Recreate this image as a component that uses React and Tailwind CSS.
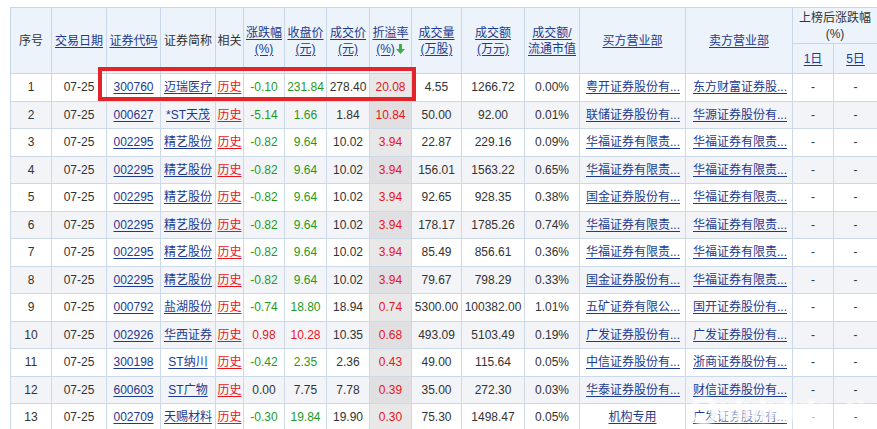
import React from "react";

const rows = [
  ["1","07-25","300760","迈瑞医疗","-0.10","231.84","278.40","20.08","4.55","1266.72","0.00%","粤开证券股份有...","东方财富证券股..."],
  ["2","07-25","000627","*ST天茂","-5.14","1.66","1.84","10.84","50.00","92.00","0.01%","联储证券股份有...","华源证券股份有..."],
  ["3","07-25","002295","精艺股份","-0.82","9.64","10.02","3.94","22.87","229.16","0.09%","华福证券有限责...","华福证券有限责..."],
  ["4","07-25","002295","精艺股份","-0.82","9.64","10.02","3.94","156.01","1563.22","0.65%","华福证券有限责...","华福证券有限责..."],
  ["5","07-25","002295","精艺股份","-0.82","9.64","10.02","3.94","92.65","928.35","0.38%","国金证券股份有...","华福证券有限责..."],
  ["6","07-25","002295","精艺股份","-0.82","9.64","10.02","3.94","178.17","1785.26","0.74%","华福证券有限责...","华福证券有限责..."],
  ["7","07-25","002295","精艺股份","-0.82","9.64","10.02","3.94","85.49","856.61","0.36%","华福证券有限责...","华福证券有限责..."],
  ["8","07-25","002295","精艺股份","-0.82","9.64","10.02","3.94","79.67","798.29","0.33%","国金证券股份有...","华福证券有限责..."],
  ["9","07-25","000792","盐湖股份","-0.74","18.80","18.94","0.74","5300.00","100382.00","1.01%","五矿证券有限公...","国开证券股份有..."],
  ["10","07-25","002926","华西证券","0.98","10.28","10.35","0.68","493.09","5103.49","0.19%","广发证券股份有...","广发证券股份有..."],
  ["11","07-25","300198","ST纳川","-0.42","2.35","2.36","0.43","49.00","115.64","0.05%","中信证券股份有...","浙商证券股份有..."],
  ["12","07-25","600603","ST广物","0.00","7.75","7.78","0.39","35.00","272.30","0.03%","华泰证券股份有...","财信证券股份有..."],
  ["13","07-25","002709","天赐材料","-0.30","19.84","19.90","0.30","75.30","1498.47","0.05%","机构专用","广发证券股份有..."],
];

const widths = [41, 55, 54, 55, 28, 41, 42, 43, 42, 50, 63, 55, 106, 107, 41, 44];

function chgColor(v) {
  const n = parseFloat(v);
  if (n > 0) return "text-[#e8141c]";
  if (n < 0) return "text-[#1f9a1f]";
  return "text-[#333333]";
}

const th = "border border-[#c6d7ea] bg-[#edf3fa] font-normal p-0 align-middle text-center leading-[16px]";
const td = "border border-[#cbd9e9] p-0 align-middle text-center whitespace-nowrap overflow-hidden";
const link = "text-[#1c3a8f] underline underline-offset-[2px]";

function Arrow() {
  return (
    <svg width="9" height="10" viewBox="0 0 9 10" className="inline-block align-[-1px] ml-[1px]">
      <path d="M3 0h3v5h3L4.5 10 0 5h3z" fill="#3fae49" />
    </svg>
  );
}

function Watermark() {
  const bars = [];
  const xs = [4, 14, 22, 30, 38, 46, 54, 62, 70, 78, 86, 94, 102];
  xs.forEach((x, i) => {
    bars.push(<rect key={"b" + i} x={x} y={i % 3 === 0 ? 6 : 9} width="6" height={i % 3 === 0 ? 22 : 18} rx="2" fill="white" />);
  });
  return (
    <svg width="185" height="34" viewBox="0 0 185 34" className="absolute left-[688px] top-[394px] pointer-events-none">
      <defs>
        <filter id="wmblur" x="-10%" y="-30%" width="120%" height="160%">
          <feGaussianBlur stdDeviation="1.6" />
        </filter>
      </defs>
      <g filter="url(#wmblur)" opacity="0.92">
        <circle cx="16" cy="17" r="12" fill="none" stroke="white" strokeWidth="4" />
        <g transform="translate(18,0)">{bars}</g>
        <rect x="128" y="10" width="14" height="16" rx="3" fill="white" />
        <rect x="148" y="12" width="5" height="12" rx="2" fill="white" />
        <path d="M160 9 q14 8 0 17" fill="none" stroke="white" strokeWidth="4" />
        <path d="M170 7 q14 10 0 21" fill="none" stroke="white" strokeWidth="3" opacity="0.7" />
      </g>
    </svg>
  );
}

export default function App() {
  return (
    <div
      className="relative w-[877px] h-[429px] overflow-hidden bg-white pl-[10px] pt-[7px] text-[12px] text-[#333333]"
      style={{ fontFamily: '"Liberation Sans", Arial, "Noto Sans CJK SC", sans-serif' }}
    >
      <table className="table-fixed border-collapse w-[867px]">
        <colgroup>
          {widths.map((w, i) => (
            <col key={i} style={{ width: w }} />
          ))}
        </colgroup>
        <thead>
          <tr className="h-[36px]">
            <th rowSpan={2} className={th}>序号</th>
            <th rowSpan={2} className={th}><span className={link}>交易日期</span></th>
            <th rowSpan={2} className={th}><span className={link}>证券代码</span></th>
            <th rowSpan={2} className={th}>证券简称</th>
            <th rowSpan={2} className={th}>相关</th>
            <th rowSpan={2} className={th}><span className={link}>涨跌幅<br />(%)</span></th>
            <th rowSpan={2} className={th}><span className={link}>收盘价<br />(元)</span></th>
            <th rowSpan={2} className={th}><span className={link}>成交价<br />(元)</span></th>
            <th rowSpan={2} className={th}><span className={link}>折溢率<br />(%)</span><Arrow /></th>
            <th rowSpan={2} className={th}><span className={link}>成交量<br />(万股)</span></th>
            <th rowSpan={2} className={th}><span className={link}>成交额<br />(万元)</span></th>
            <th rowSpan={2} className={th}><span className={link}>成交额/<br />流通市值</span></th>
            <th rowSpan={2} className={th}><span className={link}>买方营业部</span></th>
            <th rowSpan={2} className={th}><span className={link}>卖方营业部</span></th>
            <th colSpan={2} className={th + " align-top pt-[2px]"}>上榜后涨跌幅<br />(%)</th>
          </tr>
          <tr className="h-[30px]">
            <th className={th}><span className={link}>1日</span></th>
            <th className={th}><span className={link}>5日</span></th>
          </tr>
        </thead>
        <tbody>
          {rows.map((r, i) => {
            const even = i % 2 === 1;
            const bg = even ? "bg-[#f3f4f7]" : "bg-white";
            return (
              <tr key={i} className={"h-[27.5px] " + bg}>
                <td className={td}>{r[0]}</td>
                <td className={td}>{r[1]}</td>
                <td className={td}><span className={link}>{r[2]}</span></td>
                <td className={td}><span className={link}>{r[3]}</span></td>
                <td className={td}><span className="text-[#e8141c] underline underline-offset-[2px]">历史</span></td>
                <td className={td + " " + chgColor(r[4])}>{r[4]}</td>
                <td className={td + " " + chgColor(r[4])}>{r[5]}</td>
                <td className={td}>{r[6]}</td>
                <td className={td + " text-[#e8141c] " + (even ? "bg-[#e0e0e2]" : "bg-[#e8e8e8]")}>{r[7]}</td>
                <td className={td}>{r[8]}</td>
                <td className={td}>{r[9]}</td>
                <td className={td}>{r[10]}</td>
                <td className={td + (r[11] === "机构专用" ? " text-center" : " text-left pl-[6px]")}>
                  <span className={link}>{r[11]}</span>
                </td>
                <td className={td + " text-left pl-[7px]"}><span className={link}>{r[12]}</span></td>
                <td className={td}>-</td>
                <td className={td}>-</td>
              </tr>
            );
          })}
        </tbody>
      </table>

      {/* red annotation box */}
      <div className="absolute left-[98px] top-[67px] w-[318px] h-[34px] border-[4px] border-[#e1252b] pointer-events-none" />

      <Watermark />
    </div>
  );
}
